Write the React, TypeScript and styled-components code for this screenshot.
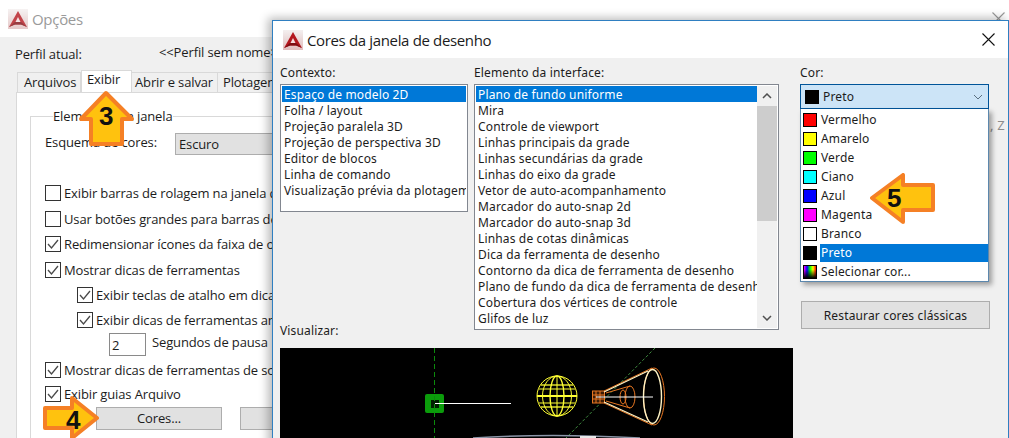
import styled, { createGlobalStyle } from 'styled-components';

const GlobalStyle = createGlobalStyle`
  html, body {
    margin: 0;
    padding: 0;
    width: 1009px;
    height: 438px;
    overflow: hidden;
    background: #f0f0f0;
  }
`;

const Page = styled.div`
  position: relative;
  width: 1009px;
  height: 438px;
  overflow: hidden;
  font-family: 'Open Sans', sans-serif;
  color: #1c1c1c;
`;

/* janela de fundo */
const OptionsWindow = styled.div`
  display: flex;
  flex-direction: column;
  height: 438px;
  background: #f0f0f0;
  font-size: 13px;
  letter-spacing: -0.13px;
`;

const OptionsTitleBar = styled.div`
  display: flex;
  align-items: center;
  justify-content: space-between;
  height: 37px;
  flex: none;
  padding: 0 4px 0 8px;
  background: #fff;
  color: #9a9a9a;
  font-size: 15px;
  letter-spacing: -0.3px;
`;

const TitleGroup = styled.div`
  display: flex;
  align-items: center;
  gap: 4px;
`;

const ProfileRow = styled.div`
  display: flex;
  height: 33px;
  flex: none;
  padding: 6px 0 0 15px;
  box-sizing: border-box;
  line-height: 18px;
`;

const ProfileLabel = styled.span`
  width: 144px;
  padding-top: 2px;
`;

const TabRow = styled.div`
  display: flex;
  align-items: flex-end;
  height: 22px;
  flex: none;
  padding-left: 18px;
`;

const Tab = styled.div<{ $active?: boolean; $width: number; $pad: number }>`
  width: ${(p) => p.$width}px;
  height: ${(p) => (p.$active ? 22 : 20)}px;
  box-sizing: border-box;
  padding-left: ${(p) => p.$pad}px;
  line-height: ${(p) => (p.$active ? 17 : 19)}px;
  background: ${(p) => (p.$active ? '#fff' : '#f0f0f0')};
  border: 1px solid #d9d9d9;
  border-bottom: none;
  margin-left: ${(p) => (p.$active ? 0 : -1)}px;
  white-space: nowrap;
  overflow: hidden;
`;

const TabPanel = styled.div`
  flex: 1;
  margin-left: 16px;
  padding: 14px 0 0 13px;
  background: #fff;
  border: 1px solid #d9d9d9;
`;

const GroupBox = styled.fieldset`
  margin: 0;
  padding: 0 0 0 14px;
  height: 340px;
  border: 1px solid #d9d9d9;
  border-bottom: none;
  border-right: none;
`;

const GroupLegend = styled.legend`
  margin-left: 8px;
  padding: 0;
  line-height: 18px;
`;

const SchemeRow = styled.div`
  display: flex;
  align-items: center;
  height: 22px;
  margin: 8px 0 0;
`;

const SchemeLabel = styled.span`
  width: 130px;
  margin-top: -4px;
`;

const SchemeSelect = styled.div`
  width: 300px;
  height: 22px;
  box-sizing: border-box;
  padding-left: 3px;
  line-height: 21px;
  background: #e1e1e1;
  border: 1px solid #adadad;
`;

const OptionList = styled.div`
  display: flex;
  flex-direction: column;
  margin-top: 24px;
  width: 500px;
`;

const OptionRow = styled.div<{ $height: number; $indent?: number }>`
  display: flex;
  align-items: center;
  gap: 3px;
  height: ${(p) => p.$height}px;
  padding-left: ${(p) => p.$indent ?? 0}px;
  white-space: nowrap;
`;

const CheckBox = styled.span`
  display: flex;
  align-items: center;
  justify-content: center;
  width: 16px;
  height: 16px;
  flex: none;
  box-sizing: border-box;
  background: #fff;
  border: 1px solid #333;
`;

const NumberInput = styled.div`
  width: 37px;
  height: 23px;
  box-sizing: border-box;
  margin-right: 3px;
  padding-left: 2px;
  line-height: 23px;
  border: 1px solid #8a8a8a;
`;

const SecondsRow = styled.div`
  display: flex;
  height: 25px;
  padding: 1px 0 0 64px;
  box-sizing: border-box;
  align-items: flex-start;
  white-space: nowrap;
  gap: 3px;
`;

const ColorsRow = styled.div`
  display: flex;
  gap: 18px;
  margin-top: 1px;
  padding-left: 51px;
`;

const PlainButton = styled.div<{ $width: number }>`
  width: ${(p) => p.$width}px;
  height: 23px;
  box-sizing: border-box;
  line-height: 20px;
  text-align: center;
  background: #e1e1e1;
  border: 1px solid #adadad;
`;

/* dialogo de cores */
const Dialog = styled.div`
  position: absolute;
  left: 272px;
  top: 20px;
  width: 737px;
  height: 430px;
  box-sizing: border-box;
  background: #f0f0f0;
  border: 1px solid #2f7fc1;
  box-shadow: -4px -2px 9px rgba(0, 0, 0, 0.28);
  font-family: 'Noto Sans', sans-serif;
  font-size: 12px;
  letter-spacing: 0.15px;
`;

const DialogTitleBar = styled.div`
  display: flex;
  align-items: center;
  justify-content: space-between;
  height: 37px;
  padding: 0 13px 0 10px;
  background: #fff;
  font-family: 'Open Sans', sans-serif;
  font-size: 15px;
  letter-spacing: -0.35px;
`;

const DialogBody = styled.div`
  display: flex;
  flex-direction: column;
  padding: 7px 0 0 7px;
`;

const Columns = styled.div`
  display: flex;
  height: 283px;
`;

const Column = styled.div<{ $width: number; $marginRight: number }>`
  position: relative;
  display: flex;
  flex-direction: column;
  width: ${(p) => p.$width}px;
  margin-right: ${(p) => p.$marginRight}px;
`;

const FieldLabel = styled.div`
  height: 19px;
  line-height: 16px;
`;

const ListBox = styled.div<{ $height: number }>`
  display: flex;
  height: ${(p) => p.$height}px;
  box-sizing: border-box;
  padding: 1px;
  background: #fff;
  border: 1px solid #828790;
`;

const ListItems = styled.div`
  flex: 1;
  min-width: 0;
  overflow: hidden;
`;

const ListItem = styled.div<{ $selected?: boolean }>`
  height: 16px;
  padding-left: 2px;
  line-height: 18px;
  white-space: nowrap;
  overflow: hidden;
  color: ${(p) => (p.$selected ? '#fff' : '#1c1c1c')};
  background: ${(p) => (p.$selected ? '#0078d7' : 'transparent')};
`;

const ScrollBar = styled.div`
  display: flex;
  flex-direction: column;
  align-items: center;
  width: 20px;
  flex: none;
  background: #f0f0f0;
`;

const ScrollArrow = styled.div`
  display: flex;
  align-items: center;
  justify-content: center;
  width: 100%;
  height: 20px;
  flex: none;
`;

const ScrollThumb = styled.div`
  width: 100%;
  height: 115px;
  background: #cdcdcd;
`;

const ScrollSpace = styled.div`
  flex: 1;
`;

const PreviewLabel = styled.div`
  margin-top: auto;
  margin-bottom: 9px;
  height: 16px;
  line-height: 16px;
`;

const Preview = styled.div`
  width: 513px;
  height: 90px;
  background: #000;
`;

const ComboBox = styled.div`
  display: flex;
  align-items: center;
  gap: 4px;
  height: 25px;
  box-sizing: border-box;
  padding: 0 5px 0 4px;
  background: #cce4f7;
  border: 1px solid #005499;
`;

const ComboText = styled.span`
  flex: 1;
`;

const Swatch = styled.span<{ $color: string }>`
  width: 14px;
  height: 14px;
  flex: none;
  box-sizing: border-box;
  background: ${(p) => p.$color};
  border: 1px solid #000;
`;

const RainbowSwatch = styled.span`
  width: 14px;
  height: 14px;
  flex: none;
  box-sizing: border-box;
  border: 1px solid #000;
  background: linear-gradient(to bottom, transparent 30%, #000 100%),
    linear-gradient(to right, #f0f, #00f 25%, #0f0 50%, #ff0 75%, #f00);
`;

const DropDown = styled.div`
  position: absolute;
  left: 0;
  top: 44px;
  width: 189px;
  height: 173px;
  box-sizing: border-box;
  padding: 1px 0 0 2px;
  background: #fff;
  border: 1px solid #5b87ad;
  border-top: none;
  box-shadow: 3px 3px 5px rgba(0, 0, 0, 0.35);
`;

const DropRow = styled.div`
  display: flex;
  align-items: center;
  gap: 3px;
  height: 19px;
`;

const DropText = styled.span<{ $selected?: boolean }>`
  flex: 1;
  height: 18px;
  padding-left: 1px;
  line-height: 18px;
  color: ${(p) => (p.$selected ? '#fff' : '#1c1c1c')};
  background: ${(p) => (p.$selected ? '#0078d7' : 'transparent')};
`;

const RestoreButton = styled.div`
  width: 189px;
  height: 28px;
  box-sizing: border-box;
  margin: auto 0 19px 1px;
  line-height: 27px;
  text-align: center;
  background: #e1e1e1;
  border: 1px solid #adadad;
`;

const SideFragment = styled.span`
  position: absolute;
  left: 717px;
  top: 95px;
  color: #8c8c8c;
  font-size: 13px;
`;

/* setas numeradas por cima das janelas */
const Callout = styled.div<{ $left: number; $top: number; $width: number; $height: number }>`
  position: absolute;
  left: ${(p) => p.$left}px;
  top: ${(p) => p.$top}px;
  width: ${(p) => p.$width}px;
  height: ${(p) => p.$height}px;
`;

const CalloutNumber = styled.span<{ $left: number; $top: number }>`
  position: absolute;
  left: ${(p) => p.$left}px;
  top: ${(p) => p.$top}px;
  font-family: 'Liberation Sans', sans-serif;
  font-size: 26px;
  font-weight: 700;
  line-height: 26px;
  color: #111;
`;

const AppLogo = ({ faded }: { faded?: boolean }) => (
  <svg width="20" height="20" viewBox="0 0 20 20" opacity={faded ? 0.8 : 1}>
    <defs>
      <linearGradient id={faded ? 'logoA' : 'logoB'} x1="0" y1="0" x2="0" y2="1">
        <stop offset="0" stopColor="#f4f0f0" />
        <stop offset="1" stopColor="#e0bcbc" />
      </linearGradient>
    </defs>
    <rect width="20" height="20" fill={`url(#${faded ? 'logoA' : 'logoB'})`} />
    <path d="M10 2 L19 18 L13 15.5 L7 15.5 L1 18 Z" fill="#b3161d" />
    <path d="M10 8 L12.5 13 L7.5 13 Z" fill="#fff" opacity="0.85" />
    <path d="M1 18 L7 13 L13 13 L19 18 L13 15.5 L7 15.5 Z" fill="#7e0d12" />
  </svg>
);

const Tick = () => (
  <svg width="12" height="12" viewBox="0 0 12 12">
    <path d="M1 6 L4.5 10 L11 2" fill="none" stroke="#4a4a4a" strokeWidth="1.3" />
  </svg>
);

const CloseIcon = ({ size, color }: { size: number; color: string }) => (
  <svg width={size} height={size} viewBox="0 0 13 13">
    <path d="M0.5 0.5 L12.5 12.5 M12.5 0.5 L0.5 12.5" stroke={color} strokeWidth="1.1" />
  </svg>
);

const Chevron = ({ up, color, weight = 1.5 }: { up?: boolean; color: string; weight?: number }) => (
  <svg width="10" height="6" viewBox="0 0 10 6">
    <path d={up ? 'M1 5 L5 1 L9 5' : 'M1 1 L5 5 L9 1'} fill="none" stroke={color} strokeWidth={weight} />
  </svg>
);

const ArrowShape = ({ width, height, points }: { width: number; height: number; points: string }) => (
  <svg width={width} height={height} viewBox={`0 0 ${width} ${height}`}>
    <polygon points={points} fill="#ffc20e" stroke="#f58025" strokeWidth="4" strokeLinejoin="round" />
  </svg>
);

const PreviewDrawing = () => (
  <svg width="513" height="90" viewBox="0 0 513 90">
    <line x1="375" y1="0" x2="286" y2="90" stroke="#3f8a3f" strokeDasharray="3 2" />
    <rect x="145" y="46" width="19" height="19" rx="2" fill="#0b9c0b" />
    <rect x="151" y="52" width="8" height="8" fill="#021f02" />
    <line x1="154.5" y1="0" x2="154.5" y2="90" stroke="#0c8a0c" strokeDasharray="5 3" />
    <line x1="155" y1="55.5" x2="231" y2="55.5" stroke="#fff" />

    <g fill="none" stroke="#ffff33">
      <circle cx="277" cy="48" r="20" />
      <ellipse cx="277" cy="48" rx="14.5" ry="20" />
      <ellipse cx="277" cy="48" rx="7" ry="20" strokeWidth="1.4" />
      <line x1="277" y1="28" x2="277" y2="68" />
      <line x1="257" y1="48" x2="297" y2="48" strokeWidth="2" />
      <line x1="261" y1="37" x2="293" y2="37" strokeWidth="1.3" />
      <line x1="259" y1="41" x2="295" y2="41" />
      <line x1="259" y1="55" x2="295" y2="55" />
      <line x1="261" y1="59" x2="293" y2="59" strokeWidth="1.3" />
    </g>

    <g fill="none" stroke="#e87722">
      <rect x="312.5" y="43" width="12" height="12" fill="#3d1d06" />
      <line x1="316" y1="43" x2="316" y2="55" />
      <line x1="320" y1="43" x2="320" y2="55" />
      <line x1="312" y1="47" x2="324" y2="47" />
      <line x1="312" y1="51" x2="324" y2="51" />
      <ellipse cx="374" cy="48.5" rx="10.5" ry="28.5" />
      <path d="M324 43 L372 20 M324 55 L372 77" />
      <ellipse cx="350" cy="49" rx="5" ry="11" />
      <ellipse cx="343" cy="49" rx="3" ry="7" />
      <path d="M326 45 L350 38 M326 53 L350 60" />
    </g>
    <g fill="none" stroke="#fff3c4">
      <ellipse cx="372.5" cy="48.5" rx="9" ry="27" strokeWidth="1.4" />
      <path d="M324 44 L368 23 M324 54 L368 74" strokeWidth="1.2" />
    </g>
    <line x1="316" y1="49" x2="373" y2="49" stroke="#fff" />

    <path d="M193 90 Q270 85 360 90" fill="none" stroke="#8c96a8" strokeWidth="1.5" />
    <rect x="300" y="88" width="16" height="2" fill="#e8e8e8" />
  </svg>
);

const contextItems = [
  'Espaço de modelo 2D',
  'Folha / layout',
  'Projeção paralela 3D',
  'Projeção de perspectiva 3D',
  'Editor de blocos',
  'Linha de comando',
  'Visualização prévia da plotagem',
];

const elementItems = [
  'Plano de fundo uniforme',
  'Mira',
  'Controle de viewport',
  'Linhas principais da grade',
  'Linhas secundárias da grade',
  'Linhas do eixo da grade',
  'Vetor de auto-acompanhamento',
  'Marcador do auto-snap 2d',
  'Marcador do auto-snap 3d',
  'Linhas de cotas dinâmicas',
  'Dica da ferramenta de desenho',
  'Contorno da dica de ferramenta de desenho',
  'Plano de fundo da dica de ferramenta de desenho',
  'Cobertura dos vértices de controle',
  'Glifos de luz',
];

const colorItems = [
  { label: 'Vermelho', color: '#ff0000' },
  { label: 'Amarelo', color: '#ffff00' },
  { label: 'Verde', color: '#00ff00' },
  { label: 'Ciano', color: '#00ffff' },
  { label: 'Azul', color: '#0000ff' },
  { label: 'Magenta', color: '#ff00ff' },
  { label: 'Branco', color: '#ffffff' },
  { label: 'Preto', color: '#000000', selected: true },
];

const OptionCheck = ({
  label,
  height,
  indent,
  checked = true,
}: {
  label: string;
  height: number;
  indent?: number;
  checked?: boolean;
}) => (
  <OptionRow $height={height} $indent={indent}>
    <CheckBox>{checked && <Tick />}</CheckBox>
    {label}
  </OptionRow>
);

export default function App() {
  return (
    <Page>
      <GlobalStyle />
      <OptionsWindow>
        <OptionsTitleBar>
          <TitleGroup>
            <AppLogo faded />
            Opções
          </TitleGroup>
          <CloseIcon size={13} color="#9a9a9a" />
        </OptionsTitleBar>
        <ProfileRow>
          <ProfileLabel>Perfil atual:</ProfileLabel>
          <span>&lt;&lt;Perfil sem nome&gt;&gt;</span>
        </ProfileRow>
        <TabRow>
          <Tab $width={64} $pad={6}>
            Arquivos
          </Tab>
          <Tab $active $width={51} $pad={5}>
            Exibir
          </Tab>
          <Tab $width={87} $pad={3}>
            Abrir e salvar
          </Tab>
          <Tab $width={80} $pad={5}>
            Plotagem
          </Tab>
        </TabRow>
        <TabPanel>
          <GroupBox>
            <GroupLegend>Elementos da janela</GroupLegend>
            <SchemeRow>
              <SchemeLabel>Esquema de cores:</SchemeLabel>
              <SchemeSelect>Escuro</SchemeSelect>
            </SchemeRow>
            <OptionList>
              <OptionCheck height={27} checked={false} label="Exibir barras de rolagem na janela de desenho" />
              <OptionCheck height={25} checked={false} label="Usar botões grandes para barras de ferramentas" />
              <OptionCheck height={26} label="Redimensionar ícones da faixa de opções" />
              <OptionCheck height={25} label="Mostrar dicas de ferramentas" />
              <OptionCheck height={25} indent={32} label="Exibir teclas de atalho em dicas" />
              <OptionCheck height={25} indent={32} label="Exibir dicas de ferramentas ampliadas" />
              <SecondsRow>
                <NumberInput>2</NumberInput>
                Segundos de pausa
              </SecondsRow>
              <OptionCheck height={25} label="Mostrar dicas de ferramentas de sobreposição" />
              <OptionCheck height={24} label="Exibir guias Arquivo" />
              <ColorsRow>
                <PlainButton $width={126}>Cores...</PlainButton>
                <PlainButton $width={126}>Fontes...</PlainButton>
              </ColorsRow>
            </OptionList>
          </GroupBox>
        </TabPanel>
      </OptionsWindow>

      <Dialog>
        <DialogTitleBar>
          <TitleGroup>
            <AppLogo />
            Cores da janela de desenho
          </TitleGroup>
          <CloseIcon size={13} color="#111" />
        </DialogTitleBar>
        <DialogBody>
          <SideFragment>, Z</SideFragment>
          <Columns>
            <Column $width={188} $marginRight={6}>
              <FieldLabel>Contexto:</FieldLabel>
              <ListBox $height={128}>
                <ListItems>
                  {contextItems.map((item, i) => (
                    <ListItem key={item} $selected={i === 0}>
                      {item}
                    </ListItem>
                  ))}
                </ListItems>
              </ListBox>
              <PreviewLabel>Visualizar:</PreviewLabel>
            </Column>
            <Column $width={305} $marginRight={21}>
              <FieldLabel>Elemento da interface:</FieldLabel>
              <ListBox $height={246}>
                <ListItems>
                  {elementItems.map((item, i) => (
                    <ListItem key={item} $selected={i === 0}>
                      {item}
                    </ListItem>
                  ))}
                </ListItems>
                <ScrollBar>
                  <ScrollArrow>
                    <Chevron up color="#505050" />
                  </ScrollArrow>
                  <ScrollThumb />
                  <ScrollSpace />
                  <ScrollArrow>
                    <Chevron color="#505050" />
                  </ScrollArrow>
                </ScrollBar>
              </ListBox>
            </Column>
            <Column $width={189} $marginRight={0}>
              <FieldLabel>Cor:</FieldLabel>
              <ComboBox>
                <Swatch $color="#000" />
                <ComboText>Preto</ComboText>
                <Chevron color="#5a6f80" weight={1} />
              </ComboBox>
              <DropDown>
                {colorItems.map((item) => (
                  <DropRow key={item.label}>
                    <Swatch $color={item.color} />
                    <DropText $selected={item.selected}>{item.label}</DropText>
                  </DropRow>
                ))}
                <DropRow>
                  <RainbowSwatch />
                  <DropText>Selecionar cor...</DropText>
                </DropRow>
              </DropDown>
              <RestoreButton>Restaurar cores clássicas</RestoreButton>
            </Column>
          </Columns>
          <Preview>
            <PreviewDrawing />
          </Preview>
        </DialogBody>
      </Dialog>

      <Callout $left={79} $top={90} $width={56} $height={58}>
        <ArrowShape width={56} height={58} points="27,3 53,29 43,29 43,54 12,54 12,29 2,29" />
        <CalloutNumber $left={20} $top={13}>
          3
        </CalloutNumber>
      </Callout>
      <Callout $left={42} $top={396} $width={58} $height={44}>
        <ArrowShape width={58} height={44} points="3,12 30,12 30,2 55,22 30,42 30,32 3,32" />
        <CalloutNumber $left={24} $top={11}>
          4
        </CalloutNumber>
      </Callout>
      <Callout $left={869} $top={173} $width={67} $height={51}>
        <ArrowShape width={67} height={51} points="3,25 34,2 34,12 64,12 64,37 34,37 34,49" />
        <CalloutNumber $left={18} $top={12}>
          5
        </CalloutNumber>
      </Callout>
    </Page>
  );
}
